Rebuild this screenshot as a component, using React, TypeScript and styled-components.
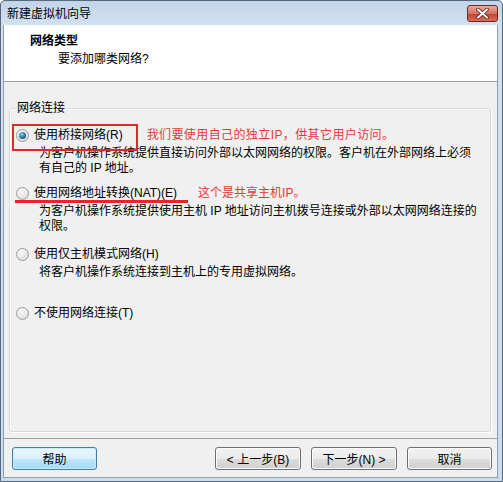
import React from 'react';
import styled, { createGlobalStyle } from 'styled-components';

const Global = createGlobalStyle`
  html, body { margin: 0; padding: 0; background: #ffffff; }
  body {
    font-family: "Liberation Sans", "Noto Sans CJK SC", sans-serif;
    font-size: 12px;
    color: #000;
  }
  * { box-sizing: border-box; }
`;

const Window = styled.div`
  width: 503px;
  height: 482px;
  display: flex;
  flex-direction: column;
  background: linear-gradient(#c3d5ea, #d3e1f0 26px, #cddcec);
  border: 1px solid #55687e;
  border-radius: 5px 5px 0 0;
`;

const TitleBar = styled.div`
  height: 24px;
  display: flex;
  align-items: flex-start;
  padding-left: 6px;
`;

const TitleText = styled.span`
  margin-top: 5px;
  line-height: 16px;
  font-size: 12px;
  color: #000;
`;

const CloseButton = styled.div`
  margin-left: auto;
  margin-right: 4px;
  margin-top: 4px;
  width: 31px;
  height: 17px;
  border: 1px solid #6b2b24;
  border-radius: 3px;
  background: linear-gradient(#e9a99c, #d4735f 50%, #c2402e 51%, #d5715a);
  display: flex;
  align-items: center;
  justify-content: center;
`;

const Client = styled.div`
  flex: 1;
  display: flex;
  flex-direction: column;
  margin: 0 4px 3px 2px;
  border: 1px solid #8c9db0;
  border-top: none;
`;

const Header = styled.div`
  height: 57px;
  background: #ffffff;
  border-bottom: 1px solid #a0a0a0;
  padding-top: 8px;
`;

const HeaderTitle = styled.div`
  margin-left: 26px;
  font-weight: bold;
  line-height: 16px;
`;

const HeaderSubtitle = styled.div`
  margin-left: 54px;
  margin-top: 2px;
  line-height: 16px;
`;

const Body = styled.div`
  flex: 1;
  display: flex;
  flex-direction: column;
  background: #f0f0f0;
  padding: 18px 6px 6px 5px;
`;

const GroupBox = styled.fieldset`
  flex: 1;
  margin: 0;
  padding: 0;
  border: 1px solid #d5d9dc;
  border-radius: 3px;
  box-shadow: inset 1px 1px 0 #fff, 1px 1px 0 #fff;
`;

const Legend = styled.legend`
  margin-left: 6px;
  padding: 0 1px;
  line-height: 16px;
`;

const Option = styled.div<{ $gap: number }>`
  margin-top: ${(p) => p.$gap}px;
`;

const RadioRow = styled.div<{ $boxed?: boolean; $underlined?: boolean }>`
  position: relative;
  display: flex;
  align-items: center;
  height: 16px;
  padding-left: 6px;

  ${(p) =>
    p.$boxed &&
    `
    &::before {
      content: '';
      position: absolute;
      left: 2px;
      top: -3px;
      width: 122px;
      height: 23px;
      border: 2px solid #e3262a;
    }
  `}

  ${(p) =>
    p.$underlined &&
    `
    &::after {
      content: '';
      position: absolute;
      left: 5px;
      top: 15px;
      width: 173px;
      height: 3px;
      background: #e2262a;
    }
  `}
`;

const Radio = styled.span<{ $checked?: boolean }>`
  position: relative;
  width: 13px;
  height: 13px;
  border-radius: 50%;
  border: 1px solid #9a9a9a;
  background: radial-gradient(circle at 40% 35%, #ffffff 0%, #ececec 45%, #cfcfcf 100%);
  flex: none;

  &::after {
    content: '';
    position: absolute;
    left: 2px;
    top: 2px;
    width: 7px;
    height: 7px;
    border-radius: 50%;
    background: ${(p) =>
      p.$checked
        ? 'radial-gradient(circle at 40% 35%, #8fdcf5 0%, #2d7ea6 45%, #0d3a56 100%)'
        : 'radial-gradient(circle at 40% 35%, #f7f7f7 0%, #dcdcdc 100%)'};
  }
`;

const RadioLabel = styled.span`
  margin-left: 5px;
  line-height: 16px;
  white-space: nowrap;
`;

const Note = styled.span<{ $gap: number; $spacing?: number }>`
  margin-left: ${(p) => p.$gap}px;
  letter-spacing: ${(p) => p.$spacing ?? 0}px;
  color: #e4383a;
  line-height: 16px;
  white-space: nowrap;
`;

const Desc = styled.div`
  margin-top: 3px;
  padding-left: 29px;
  padding-right: 8px;
  line-height: 15px;
`;

const Footer = styled.div`
  display: flex;
  align-items: center;
  background: #f0f0f0;
  border-top: 1px solid #a0a0a0;
  padding: 8px 5px 7px 8px;
`;

const Button = styled.button<{ $focused?: boolean; $w: number }>`
  width: ${(p) => p.$w}px;
  height: 23px;
  padding: 0;
  font-family: inherit;
  font-size: 12px;
  color: #000;
  border-radius: 3px;
  border: 1px solid ${(p) => (p.$focused ? '#3c7fb1' : '#707070')};
  background: ${(p) =>
    p.$focused
      ? 'linear-gradient(#eaf6fd, #d9f0fc 50%, #bee6fd 51%, #a7d9f5)'
      : 'linear-gradient(#f2f2f2, #ebebeb 50%, #dddddd 51%, #cfcfcf)'};
  box-shadow: inset 0 0 0 1px ${(p) => (p.$focused ? '#c8ecfc' : '#fcfcfc')};
  margin-left: ${(p) => (p.$focused ? 0 : 10)}px;

  &:first-of-type {
    margin-left: 0;
  }
`;

const Spacer = styled.div`
  flex: 1;
`;

export default function App() {
  return (
    <>
      <Global />
      <Window>
        <TitleBar>
          <TitleText>新建虚拟机向导</TitleText>
          <CloseButton>
            <svg width="13" height="11" viewBox="0 0 13 11">
              <path d="M2 1.5 L11 9.5 M11 1.5 L2 9.5" stroke="#5a1d16" strokeWidth="3.6" strokeLinecap="round" />
              <path d="M2 1.5 L11 9.5 M11 1.5 L2 9.5" stroke="#ffffff" strokeWidth="2" strokeLinecap="round" />
            </svg>
          </CloseButton>
        </TitleBar>
        <Client>
          <Header>
            <HeaderTitle>网络类型</HeaderTitle>
            <HeaderSubtitle>要添加哪类网络?</HeaderSubtitle>
          </Header>
          <Body>
            <GroupBox>
              <Legend>网络连接</Legend>
              <Option $gap={11}>
                <RadioRow $boxed>
                  <Radio $checked />
                  <RadioLabel>使用桥接网络(R)</RadioLabel>
                  <Note $gap={24} $spacing={0.4}>我们要使用自己的独立IP，供其它用户访问。</Note>
                </RadioRow>
                <Desc>
                  为客户机操作系统提供直接访问外部以太网网络的权限。客户机在外部网络上必须
                  <br />
                  有自己的 IP 地址。
                </Desc>
              </Option>
              <Option $gap={9}>
                <RadioRow $underlined>
                  <Radio />
                  <RadioLabel>使用网络地址转换(NAT)(E)</RadioLabel>
                  <Note $gap={21}>这个是共享主机IP。</Note>
                </RadioRow>
                <Desc>
                  为客户机操作系统提供使用主机 IP 地址访问主机拨号连接或外部以太网网络连接的
                  <br />
                  权限。
                </Desc>
              </Option>
              <Option $gap={12}>
                <RadioRow>
                  <Radio />
                  <RadioLabel>使用仅主机模式网络(H)</RadioLabel>
                </RadioRow>
                <Desc>将客户机操作系统连接到主机上的专用虚拟网络。</Desc>
              </Option>
              <Option $gap={25}>
                <RadioRow>
                  <Radio />
                  <RadioLabel>不使用网络连接(T)</RadioLabel>
                </RadioRow>
              </Option>
            </GroupBox>
          </Body>
          <Footer>
            <Button $focused $w={85}>帮助</Button>
            <Spacer />
            <Button $w={86}>&lt; 上一步(B)</Button>
            <Button $w={86}>下一步(N) &gt;</Button>
            <Button $w={85}>取消</Button>
          </Footer>
        </Client>
      </Window>
    </>
  );
}
